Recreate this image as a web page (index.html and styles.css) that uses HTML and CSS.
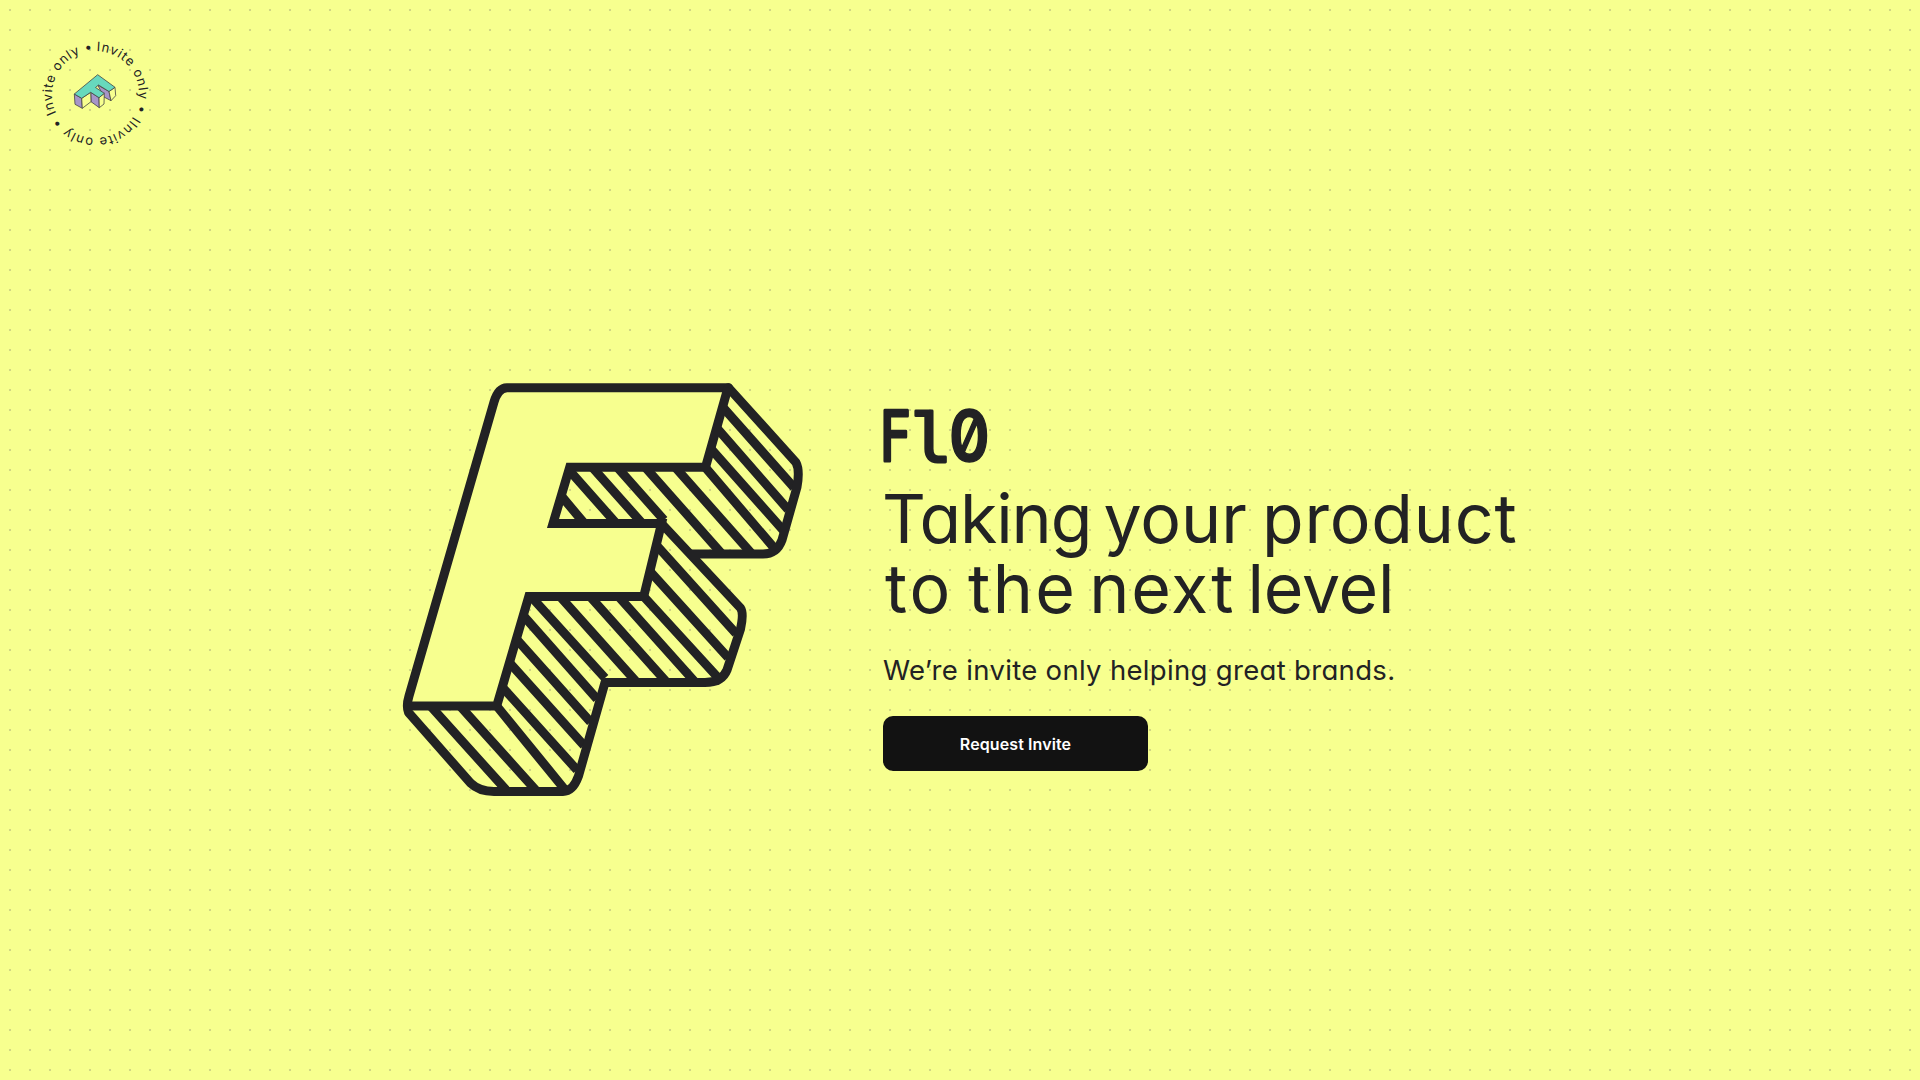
FILE: index.html
```html
<!DOCTYPE html>
<html lang="en">
<head>
<meta charset="utf-8">
<title>Fl0</title>
<link rel="stylesheet" href="styles.css">
</head>
<body>
<header class="header">
  <svg class="badge" viewBox="0 0 120 120" role="img" aria-label="Invite only">
    <defs><path id="ring" d="M59.500 16a43.500 43.500 0 1 1 0 87a43.500 43.500 0 1 1 0-87"/></defs>
    <text class="badge-text"><textPath href="#ring" startOffset="1" textLength="269">Invite only • IInvite only • Invite only •</textPath></text>
    <g class="badge-mark">
      <path fill="#a695c8" d="M38.300 59L45.700 63.300L46.300 73.300L39 69.300ZM54.700 57.300L63 62.700L63.300 72.700L55 66.700ZM61.700 50L73 56.500L75 65.700L68 62Z"/>
      <path fill="#f7ff8f" d="M45.700 63.300L54.700 57.300L55 66.700L46.300 73.300ZM63 62.700L68.300 58.300L68 69L63.300 72.700ZM73 56.500L79 52.300L79.700 60.700L75 65.700Z"/>
      <path fill="#67d9bd" d="M61.700 39.700L79 52.300L73 56.500L62.500 50L59.500 52.500L68.300 58.300L63 62.700L54.700 57.300L45.700 63.300L38.300 59Z"/>
    </g>
  </svg>
</header>
<main class="hero">
  <svg class="art" viewBox="402 382 402 415">
    <g class="lines">
      <path d="M430.500 706L507 791M460 706L536.500 791M496.700 706L566 791M500 684.500L577 770M508 661L584 745.500M515 637.500L590.500 722M521.700 613.800L597 699M531 596.500L605 678M560 596.500L636.500 682M590 596.500L666.500 682M618.500 596.500L695 682M643.700 596.500L722 682M646.500 567.500L728 657.500M654 542.500L736 633.500"/>
      <path d="M558 492L584 523M569 470L615 522M592 467L641 522M617 467L664 520M645 467L722 554M675 467L752 554M705 467L775 549M706.700 444L783 530M713.300 424L788 509.500M720 404L794 487.500"/>
    </g>
    <path class="face" d="M507 387.7H728L705.5 467.2H569.7L553 523.5H661.5L643.7 596.5H528.800L496.7 706H408Q407 702 409 696L494 402Q498 388 507 387.7Z"/>
    <g class="lines">
      <path class="outline" d="M728.500 387.700H507Q498 388 494 402L409 696Q406 706 408.500 712.500L470.500 783Q479 791.400 494 791.400H563Q573 791.400 578.500 776L605 682.500H705Q722 682.500 727 670L740.500 629Q744 613 740.500 608L661.500 523.500"/>
      <path class="outline" d="M691 554H763Q777 554 782 540L797 487Q800 470 796 462.500L728.500 387.700"/>
      <path d="M728 387.700L705.500 467.200H569.700L553 523.500H661.500L643.700 596.500H528.800L496.700 706H408"/>
    </g>
  </svg>
  <section class="copy">
    <svg class="wordmark" viewBox="0 0 106 54" role="img" aria-label="Fl0">
      <text transform="translate(-4.500 51.700) scale(.78 1)">F</text>
      <text transform="translate(27.500 51.700) scale(1 .95)">l</text>
      <text class="zero" transform="translate(66 52.300) scale(.88 1)">0</text>
    </svg>
    <h1 class="title">
      <span class="line line-one"><span class="taking">Taking</span> <span class="your">your</span> <span class="product">product</span></span>
      <span class="line line-two"><span class="to">to</span> <span class="the">the</span> <span class="next">next</span> <span class="level">level</span></span>
    </h1>
    <p class="lead">We’re invite only helping great brands.</p>
    <a class="button" href="#">Request Invite</a>
  </section>
</main>
</body>
</html>
```
FILE: styles.css
```css
* { box-sizing: border-box; }
body {
  margin: 0;
  height: 1080px;
  overflow: hidden;
  color: #222224;
  background-color: #f7ff8f;
  background-image: conic-gradient(from 270deg at 2px 2px, #d0d584 90deg, #f7ff8f 0);
  background-size: 20px 20px;
  background-position: 9px 9px;
  font-family: Inter, "Liberation Sans", sans-serif;
  font-feature-settings: "cv11" 1;
}
.header { height: 180px; padding: 35px 36px; }
.badge { display: block; width: 120px; height: 120px; }
.badge-text { font-size: 13px; fill: #222224; }
.badge-mark { stroke: #444; stroke-width: .8; stroke-linejoin: round; }
.hero { display: flex; align-items: flex-start; gap: 79px; padding: 202px 0 0 402px; }
.art { width: 402px; height: 415px; flex: none; }
.face { fill: #f7ff8f; }
.lines { fill: none; stroke: #222224; stroke-width: 9; }
.outline { stroke-linejoin: round; stroke-linecap: round; }
.copy { padding-top: 27px; }
.wordmark { display: block; width: 106px; height: 54px; overflow: visible; }
.wordmark text { font: 69px "DejaVu Sans Mono", monospace; fill: #222224; stroke: #222224; stroke-width: 3; stroke-linejoin: round; }
.wordmark .zero { font: 600 70px Inter, sans-serif; font-feature-settings: "zero" 1; stroke-width: 1.5; }
.title { margin: 20px 0 0; font-size: 68px; font-weight: 400; line-height: 70px; white-space: nowrap; word-spacing: -4px; }
.line { display: block; }
.line-one { margin-left: -1px; }
.line-two { margin-left: 2px; }
.taking { letter-spacing: -1.1px; }
.your { margin-left: -3px; }
.product { margin-left: 0; letter-spacing: .8px; }
.to { letter-spacing: 2.8px; }
.the { letter-spacing: 2.3px; }
.next { margin-left: -3px; letter-spacing: 1.8px; }
.level { margin-left: -3px; letter-spacing: -.2px; }
.lead { margin: 30px 0 0; font-size: 27.5px; line-height: 34px; letter-spacing: .32px; white-space: nowrap; }
.button {
  display: flex; align-items: center; justify-content: center;
  width: 265px; height: 55px; margin-top: 29px; border-radius: 10px;
  background: #121212; color: #fff; font-size: 16px; font-weight: 600; letter-spacing: .1px; text-decoration: none;
}
```
